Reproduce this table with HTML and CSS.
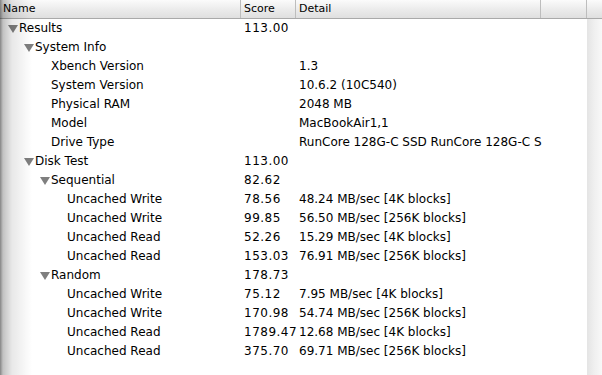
FILE: index.html
```html
<!DOCTYPE html>
<html>
<head>
<meta charset="utf-8">
<link rel="stylesheet" href="styles.css">
</head>
<body>
<div class="outline">
  <div class="header">
    <div class="hcell c-name">Name</div>
    <div class="hcell c-score">Score</div>
    <div class="hcell c-detail">Detail</div>
    <div class="hcell c-extra"></div>
    <div class="hcell c-end"></div>
  </div>
  <div class="rows">
    <div class="row"><div class="name l0"><span class="tri"></span>Results</div><div class="score">113.00</div><div class="detail"></div></div>
    <div class="row"><div class="name l1"><span class="tri"></span>System Info</div><div class="score"></div><div class="detail"></div></div>
    <div class="row"><div class="name l2">Xbench Version</div><div class="score"></div><div class="detail">1.3</div></div>
    <div class="row"><div class="name l2">System Version</div><div class="score"></div><div class="detail">10.6.2 (10C540)</div></div>
    <div class="row"><div class="name l2">Physical RAM</div><div class="score"></div><div class="detail">2048 MB</div></div>
    <div class="row"><div class="name l2">Model</div><div class="score"></div><div class="detail">MacBookAir1,1</div></div>
    <div class="row"><div class="name l2">Drive Type</div><div class="score"></div><div class="detail">RunCore 128G-C SSD RunCore 128G-C S</div></div>
    <div class="row"><div class="name l1"><span class="tri"></span>Disk Test</div><div class="score">113.00</div><div class="detail"></div></div>
    <div class="row"><div class="name l2b"><span class="tri"></span>Sequential</div><div class="score">82.62</div><div class="detail"></div></div>
    <div class="row"><div class="name l3">Uncached Write</div><div class="score">78.56</div><div class="detail">48.24 MB/sec [4K blocks]</div></div>
    <div class="row"><div class="name l3">Uncached Write</div><div class="score">99.85</div><div class="detail">56.50 MB/sec [256K blocks]</div></div>
    <div class="row"><div class="name l3">Uncached Read</div><div class="score">52.26</div><div class="detail">15.29 MB/sec [4K blocks]</div></div>
    <div class="row"><div class="name l3">Uncached Read</div><div class="score">153.03</div><div class="detail">76.91 MB/sec [256K blocks]</div></div>
    <div class="row"><div class="name l2b"><span class="tri"></span>Random</div><div class="score">178.73</div><div class="detail"></div></div>
    <div class="row"><div class="name l3">Uncached Write</div><div class="score">75.12</div><div class="detail">7.95 MB/sec [4K blocks]</div></div>
    <div class="row"><div class="name l3">Uncached Write</div><div class="score">170.98</div><div class="detail">54.74 MB/sec [256K blocks]</div></div>
    <div class="row"><div class="name l3">Uncached Read</div><div class="score">1789.47</div><div class="detail">12.68 MB/sec [4K blocks]</div></div>
    <div class="row"><div class="name l3">Uncached Read</div><div class="score">375.70</div><div class="detail">69.71 MB/sec [256K blocks]</div></div>
  </div>
</div>
</body>
</html>
```
FILE: styles.css
```css
html, body {
  margin: 0;
  padding: 0;
  background: #fff;
}

.outline {
  position: relative;
  width: 602px;
  height: 375px;
  overflow: hidden;
  font-family: "DejaVu Sans", "Liberation Sans", sans-serif;
  font-size: 12px;
  color: #000;
  display: flex;
  flex-direction: column;
  background: linear-gradient(to right, #fff 0, #fff 587px, #e4e4e4 587px, #efefef 594px, #f8f8f8 602px);
}

/* window edge shadow on the left */
.outline::before {
  content: "";
  position: absolute;
  left: 0;
  top: 0;
  bottom: 0;
  width: 34px;
  background: linear-gradient(to right, rgba(0,0,0,0.48) 0, rgba(0,0,0,0.24) 3px, rgba(0,0,0,0.09) 12px, rgba(0,0,0,0) 32px);
  pointer-events: none;
}

.header {
  display: flex;
  height: 18px;
  border-bottom: 1px solid #a9a9a9;
  background: linear-gradient(to bottom, #fbfbfb, #ececec 50%, #dfdfdf);
  font-size: 11px;
  line-height: 17px;
  flex: none;
}

.hcell {
  box-sizing: border-box;
  padding-left: 3px;
  border-right: 1px solid #bdbdbd;
  white-space: nowrap;
}

.c-name { width: 241px; }
.c-score { width: 55px; }
.c-detail { width: 245px; }
.c-extra { width: 46px; }
.c-end { flex: 1; border-right: 0; }

.rows {
  display: flex;
  flex-direction: column;
}

.row {
  display: grid;
  grid-template-columns: 244px 55px 1fr;
  height: 19px;
  line-height: 19px;
  white-space: nowrap;
}

.name {
  display: flex;
  align-items: center;
}

.l0 { padding-left: 8px; }
.l1 { padding-left: 24px; }
.l2 { padding-left: 51px; }
.l2b { padding-left: 40px; }
.l3 { padding-left: 67px; }

.tri {
  width: 0;
  height: 0;
  border-left: 5px solid transparent;
  border-right: 5px solid transparent;
  border-top: 8px solid #7f7f7f;
  margin-right: 1px;
  margin-top: 1px;
}

.score { letter-spacing: 0.5px; }
.detail { overflow: hidden; }
```
